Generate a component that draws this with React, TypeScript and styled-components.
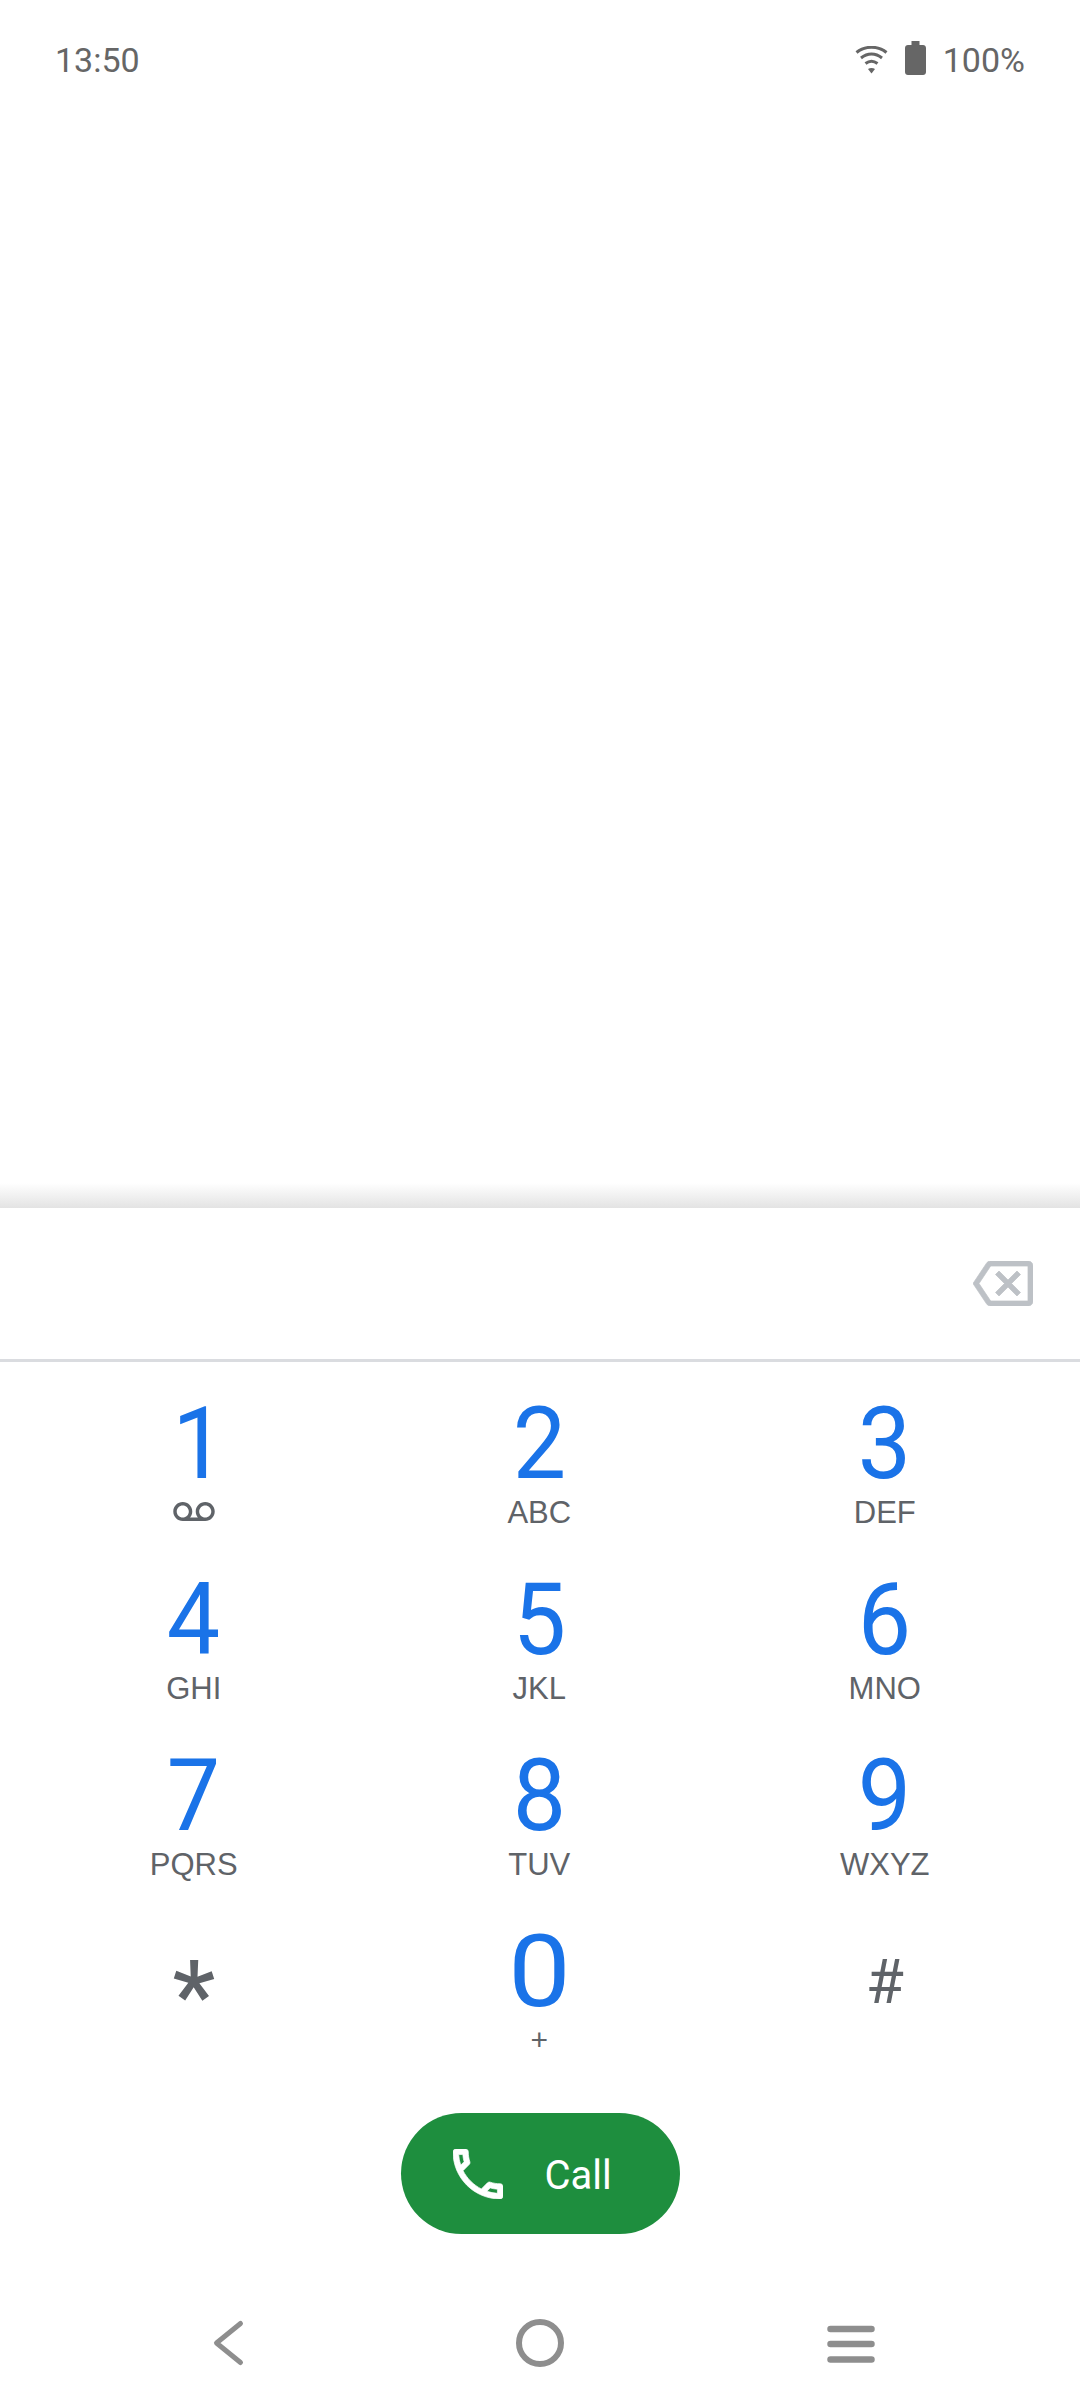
import styled, { createGlobalStyle } from 'styled-components';

const GlobalStyle = createGlobalStyle`
  html, body {
    background: #fff;
    margin: 0;
    padding: 0;
  }

  body {
    font-family: Roboto, "Liberation Sans", sans-serif;
  }
`;

const colors = {
  blue: '#1a73e8',
  gray: '#5f6368',
  green: '#1e8e3e',
  nav: '#8e8e8e',
  line: '#dadce0',
  icon: '#bdc1c6',
  status: '#666666',
};

const dialFont = '"Liberation Sans", Roboto, sans-serif';

const Screen = styled.div`
  background: #fff;
  display: flex;
  flex-direction: column;
  height: 2400px;
  overflow: hidden;
  width: 1080px;
`;

const StatusBar = styled.header`
  align-items: center;
  color: ${colors.status};
  display: flex;
  font-size: 34px;
  height: 120px;
  justify-content: space-between;
  padding: 0 55px 0 55px;
`;

const StatusIcons = styled.div`
  align-items: center;
  display: flex;
`;

const Wifi = styled.svg`
  height: 28px;
  margin-right: 17px;
  width: 33px;
`;

const Battery = styled.svg`
  height: 34px;
  margin-right: 17px;
  margin-top: -4px;
  width: 21px;
`;

const Spacer = styled.div`
  flex: 1;
`;

const Shade = styled.div`
  background: linear-gradient(to bottom, #ffffff, #e3e3e3);
  height: 25px;
`;

const InputRow = styled.div`
  align-items: center;
  border-bottom: 3px solid ${colors.line};
  display: flex;
  height: 151px;
  justify-content: flex-end;
  padding-right: 47px;
`;

const Backspace = styled.svg`
  fill: ${colors.icon};
  height: 45px;
  stroke: ${colors.icon};
  stroke-width: 0.3;
  width: 60px;
`;

const Keypad = styled.div`
  display: grid;
  font-family: ${dialFont};
  grid-template-columns: repeat(3, 345.5px);
  grid-auto-rows: 176px;
  padding: 0 21px;
`;

const Key = styled.div`
  align-items: center;
  display: flex;
  flex-direction: column;
  padding-top: 32px;
`;

const Digit = styled.span<{ $stretch?: number; $indent?: number }>`
  color: ${colors.blue};
  font-family: Roboto, sans-serif;
  font-size: 101px;
  line-height: 100px;
  padding-left: ${(p) => p.$indent ?? 0}px;
  transform: scaleX(${(p) => p.$stretch ?? 0.94});
`;

const Letters = styled.span`
  color: ${colors.gray};
  font-size: 31px;
  line-height: 32px;
  margin-top: 3px;
`;

const Voicemail = styled.svg`
  fill: ${colors.gray};
  height: 19px;
  margin-top: 8px;
  width: 42px;
`;

const Plus = styled.span`
  color: ${colors.gray};
  font-size: 30px;
  line-height: 30px;
  margin-top: 3px;
`;

const SymbolKey = styled.div<{ $size: number; $top: number; $weight?: number }>`
  color: ${colors.gray};
  display: flex;
  font-family: Roboto, sans-serif;
  font-size: ${(p) => p.$size}px;
  font-weight: ${(p) => p.$weight ?? 400};
  justify-content: center;
  line-height: ${(p) => p.$size}px;
  padding-top: ${(p) => p.$top}px;
`;

const CallRow = styled.div`
  display: flex;
  justify-content: center;
  margin-top: 47px;
`;

const CallButton = styled.button`
  align-items: center;
  background: ${colors.green};
  border: none;
  border-radius: 61px;
  color: #fff;
  display: flex;
  font-family: inherit;
  font-size: 40px;
  font-weight: 400;
  height: 121px;
  padding: 4px 0 0 52px;
  width: 279px;
`;

const PhoneIcon = styled.svg`
  fill: #fff;
  height: 50px;
  margin-right: 42px;
  margin-top: -4px;
  stroke: #fff;
  stroke-width: 0.25;
  width: 50px;
`;

const NavBar = styled.nav`
  align-items: center;
  display: grid;
  grid-template-columns: repeat(3, 311px);
  height: 166px;
  justify-items: center;
  padding: 0 0 0 73px;
`;

const NavIcon = styled.svg`
  fill: none;
  height: 48px;
  margin-top: 51px;
  stroke: ${colors.nav};
  width: 48px;
`;

const rows = [
  [
    { digit: '1', indent: 12 },
    { digit: '2', letters: 'ABC' },
    { digit: '3', letters: 'DEF' },
  ],
  [
    { digit: '4', letters: 'GHI' },
    { digit: '5', letters: 'JKL' },
    { digit: '6', letters: 'MNO' },
  ],
  [
    { digit: '7', letters: 'PQRS' },
    { digit: '8', letters: 'TUV' },
    { digit: '9', letters: 'WXYZ' },
  ],
];

const App = () => {
  return (
    <>
      <GlobalStyle />
      <Screen>
        <StatusBar>
          <span>13:50</span>
          <StatusIcons>
            <Wifi viewBox="0 0 33 28" fill="none" stroke={colors.status} strokeWidth="3">
              <path d="M1.5 6.5C10 -0.5 23 -0.5 31.5 6.5" />
              <path d="M6 12C12.5 6.8 20.5 6.8 27 12" />
              <path d="M10.5 17.5C14.5 14.5 18.5 14.5 22.5 17.5" />
              <path d="M13 23C15 21.5 18 21.5 20 23L16.5 27.5Z" fill={colors.status} stroke="none" />
            </Wifi>
            <Battery viewBox="0 0 21 34">
              <path fill={colors.status} d="M6.5 0h8v4h3.5c1.7 0 3 1.3 3 3v24c0 1.7-1.3 3-3 3H3c-1.7 0-3-1.3-3-3V7c0-1.7 1.3-3 3-3h3.5z" />
            </Battery>
            <span>100%</span>
          </StatusIcons>
        </StatusBar>
        <Spacer />
        <Shade />
        <InputRow>
          <Backspace viewBox="0 3 24 18">
            <path d="M22 3H7c-.69 0-1.23.35-1.59.88L0 12l5.41 8.11c.36.53.9.89 1.59.89h15c1.1 0 2-.9 2-2V5c0-1.1-.9-2-2-2zm0 16H7.07L2.4 12l4.66-7H22v14zm-11.59-2L14 13.41 17.59 17 19 15.59 15.41 12 19 8.41 17.59 7 14 10.59 10.41 7 9 8.41 12.59 12 9 15.59z" />
          </Backspace>
        </InputRow>
        <Keypad>
          {rows.map((row) =>
            row.map((key) => (
              <Key key={key.digit}>
                <Digit $indent={key.indent}>{key.digit}</Digit>
                {key.letters ? (
                  <Letters>{key.letters}</Letters>
                ) : (
                  <Voicemail viewBox="0 6 24 11">
                    <path d="M18.5 6C15.46 6 13 8.46 13 11.5c0 1.33.47 2.55 1.26 3.5H9.74c.79-.95 1.26-2.17 1.26-3.5C11 8.46 8.54 6 5.5 6S0 8.46 0 11.5 2.46 17 5.5 17h13c3.04 0 5.5-2.46 5.5-5.5S21.54 6 18.5 6zm-13 9C3.57 15 2 13.43 2 11.5S3.57 8 5.5 8 9 9.57 9 11.5 7.43 15 5.5 15zm13 0c-1.93 0-3.5-1.57-3.5-3.5S16.57 8 18.5 8 22 9.57 22 11.5 20.43 15 18.5 15z" />
                  </Voicemail>
                )}
              </Key>
            )),
          )}
          <SymbolKey $size={96} $top={58} $weight={500}>*</SymbolKey>
          <Key>
            <Digit $stretch={1.1}>0</Digit>
            <Plus>+</Plus>
          </Key>
          <SymbolKey $size={62} $top={61}>#</SymbolKey>
        </Keypad>
        <CallRow>
          <CallButton>
            <PhoneIcon viewBox="3 3 18 18">
              <path d="M6.54 5c.06.89.21 1.76.45 2.59l-1.2 1.2c-.41-1.2-.67-2.47-.76-3.79h1.51m9.86 12.02c.85.24 1.72.39 2.6.45v1.49c-1.32-.09-2.59-.35-3.8-.75l1.2-1.19M7.5 3H4c-.55 0-1 .45-1 1 0 9.39 7.61 17 17 17 .55 0 1-.45 1-1v-3.49c0-.55-.45-1-1-1-1.24 0-2.45-.2-3.57-.57-.1-.04-.21-.05-.31-.05-.26 0-.51.1-.71.29l-2.2 2.2c-2.83-1.45-5.15-3.76-6.59-6.59l2.2-2.2c.28-.28.36-.67.25-1.02C8.7 6.45 8.5 5.25 8.5 4c0-.55-.45-1-1-1z" />
            </PhoneIcon>
            Call
          </CallButton>
        </CallRow>
        <NavBar>
          <NavIcon viewBox="0 0 48 48" strokeWidth="5" strokeLinecap="round" strokeLinejoin="round">
            <path d="M35.5 4.5L11.5 24L35.5 43.5" />
          </NavIcon>
          <NavIcon viewBox="0 0 48 48" strokeWidth="6">
            <circle cx="24" cy="24" r="21" />
          </NavIcon>
          <NavIcon viewBox="0 0 48 48" strokeWidth="6.5" strokeLinecap="round">
            <path d="M3.5 10H44.5M3.5 25H44.5M3.5 40.5H44.5" />
          </NavIcon>
        </NavBar>
      </Screen>
    </>
  );
};

export default App;
